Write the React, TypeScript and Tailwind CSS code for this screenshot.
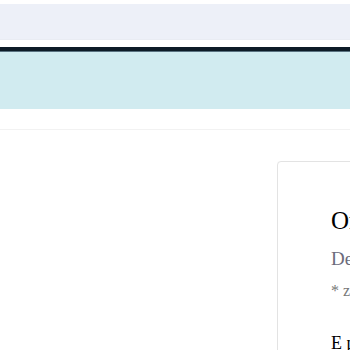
export default function App() {
  return (
    <div className="w-[350px] h-[350px] overflow-hidden bg-white" style={{ fontFamily: '"Liberation Serif", serif' }}>
      <div className="pt-1">
        <div className="h-9 bg-[#edf0f8] border-b border-[#e9ecf3]" />
      </div>
      <div className="mt-[7px] h-[5px] bg-[#0d1b27] border-b border-[#5a7280]" />
      <div className="h-[57px] bg-[#d1ebf0]" />
      <div className="h-5" />
      <div className="border-t border-[#f2f2f2]">
        <div className="flex justify-end pt-[31px]">
          <div className="w-[73px] shrink-0 overflow-hidden">
            <div className="w-[300px] h-[200px] border border-[#e3e3e3] rounded-[4px] bg-white shadow-[0_0_2px_rgba(0,0,0,0.04)] pl-[53px] pt-[46px]">
              <h2 className="text-[25px] leading-none text-black whitespace-nowrap">Order summary</h2>
              <p className="mt-[16px] text-[19px] leading-none text-[#6b6b7b] whitespace-nowrap">Delivery details</p>
              <p className="mt-[15px] text-[16px] leading-none text-[#777] whitespace-nowrap">* zip code required</p>
              <p className="mt-[35px] text-[18px] leading-none text-black whitespace-nowrap">E procedure</p>
            </div>
          </div>
        </div>
      </div>
    </div>
  );
}
